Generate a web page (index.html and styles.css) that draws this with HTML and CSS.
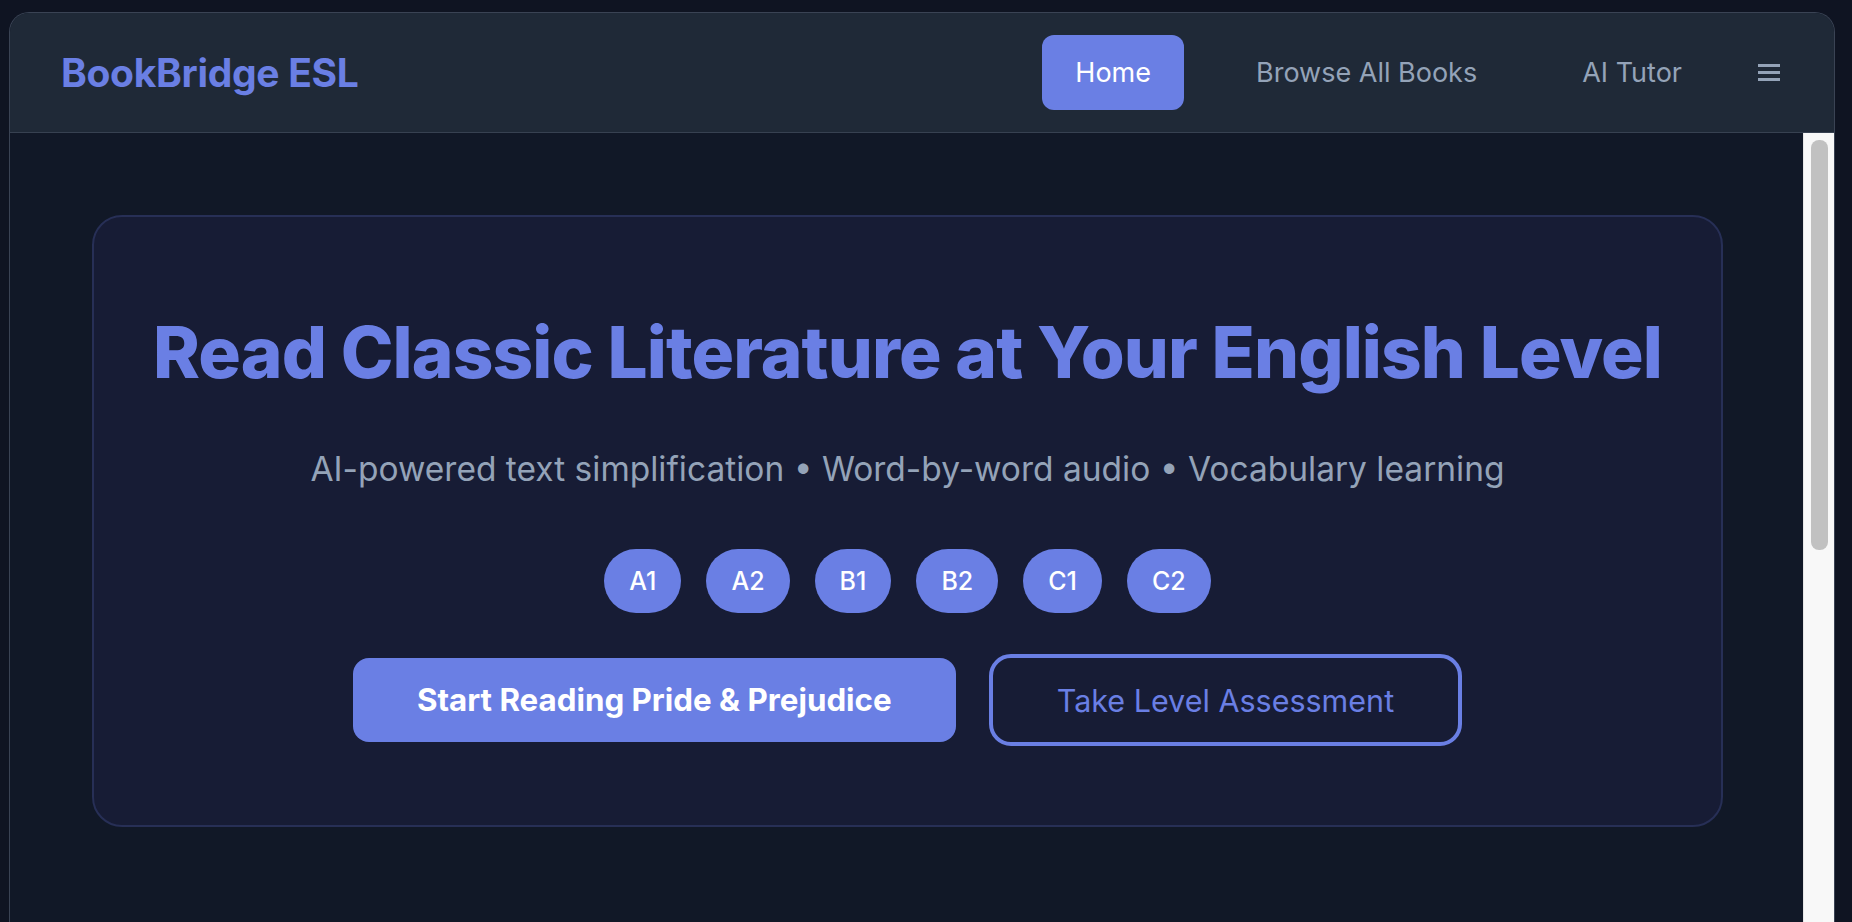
FILE: index.html
```html
<!DOCTYPE html>
<html lang="en">
<head>
<meta charset="utf-8">
<title>BookBridge ESL</title>
<link rel="stylesheet" href="styles.css">
</head>
<body>
<div class="window">
  <header class="topbar">
    <div class="logo">BookBridge ESL</div>
    <nav class="nav">
      <a class="nav-item active">Home</a>
      <a class="nav-item">Browse All Books</a>
      <a class="nav-item">AI Tutor</a>
      <span class="menu" aria-label="Menu"><i></i><i></i><i></i></span>
    </nav>
  </header>
  <div class="viewport">
    <main class="content">
      <section class="hero">
        <h1 class="hero-title">Read Classic Literature at Your English Level</h1>
        <p class="hero-sub">AI-powered text simplification • Word-by-word audio • Vocabulary learning</p>
        <div class="levels">
          <span class="level">A1</span>
          <span class="level">A2</span>
          <span class="level">B1</span>
          <span class="level">B2</span>
          <span class="level">C1</span>
          <span class="level">C2</span>
        </div>
        <div class="actions">
          <button class="btn btn-primary">Start Reading Pride &amp; Prejudice</button>
          <button class="btn btn-outline">Take Level Assessment</button>
        </div>
      </section>
    </main>
    <div class="scrollbar"><div class="thumb"></div></div>
  </div>
</div>
</body>
</html>
```

FILE: styles.css
```css
* { box-sizing: border-box; }
html, body { height: 100%; }
body {
  margin: 0;
  background: #0f1422;
  font-family: Inter, "Noto Sans", "Liberation Sans", sans-serif;
  padding: 12px 17px 0 9px;
  overflow: hidden;
}
.window {
  height: 100%;
  display: flex;
  flex-direction: column;
  border: 1px solid #3a4354;
  border-bottom: none;
  border-radius: 20px 20px 0 0;
  overflow: hidden;
  background: #111827;
}
.topbar {
  height: 120px;
  flex: none;
  background: #1f2937;
  border-bottom: 1px solid #374151;
  display: flex;
  align-items: center;
  justify-content: space-between;
  padding: 0 54px 0 51px;
}
.logo {
  color: #6a7fe4;
  font-weight: 700;
  font-size: 39px;
  letter-spacing: -0.3px;
}
.nav {
  display: flex;
  align-items: center;
  gap: 39px;
}
.nav-item {
  font-size: 27px;
  color: #94a3b8;
  padding: 0 33px;
  height: 75px;
  line-height: 75px;
  border-radius: 12px;
}
.nav-item.active {
  background: #6a7fe4;
  color: #ffffff;
}
.menu {
  display: flex;
  flex-direction: column;
  gap: 4px;
  width: 22px;
  margin-left: 4px;
}
.menu i {
  display: block;
  height: 3px;
  background: #94a3b8;
}
.viewport {
  flex: 1;
  display: flex;
  min-height: 0;
}
.content {
  flex: 1;
  padding: 82px 80px 0 82px;
  background: #111827;
}
.hero {
  background: #171c35;
  border: 2px solid #272f56;
  border-radius: 30px;
  padding: 92px 40px 79px;
  text-align: center;
}
.hero-title {
  margin: 0;
  font-size: 71px;
  line-height: 86px;
  font-weight: 800;
  color: #6a7fe4;
  letter-spacing: -0.9px;
}
.hero-sub {
  margin: 50px 0 0;
  font-size: 33.5px;
  line-height: 48px;
  color: #94a3b8;
}
.levels {
  display: flex;
  justify-content: center;
  gap: 25px;
  margin-top: 56px;
}
.level {
  height: 64px;
  line-height: 64px;
  padding: 0 25px;
  border-radius: 32px;
  background: #6a7fe4;
  color: #ffffff;
  font-size: 25px;
  font-weight: 500;
}
.actions {
  display: flex;
  justify-content: center;
  align-items: center;
  gap: 33px;
  margin-top: 41px;
}
.btn {
  font-family: inherit;
  font-size: 30.5px;
  padding: 0 64px;
  height: 84px;
  border-radius: 16px;
  cursor: pointer;
}
.btn-primary {
  background: #6a7fe4;
  color: #ffffff;
  font-size: 31.3px;
  font-weight: 700;
  border: none;
}
.btn-outline {
  background: transparent;
  color: #6a7fe4;
  font-weight: 400;
  border: 4px solid #6a7fe4;
  height: 92px;
  border-radius: 22px;
}
.scrollbar {
  width: 31px;
  flex: none;
  background: #f8f8f8;
  border-left: 1px solid #e6e6e6;
  padding: 7px 6px 0 7px;
}
.thumb {
  height: 410px;
  background: #c1c1c1;
  border-radius: 8px;
}
```
